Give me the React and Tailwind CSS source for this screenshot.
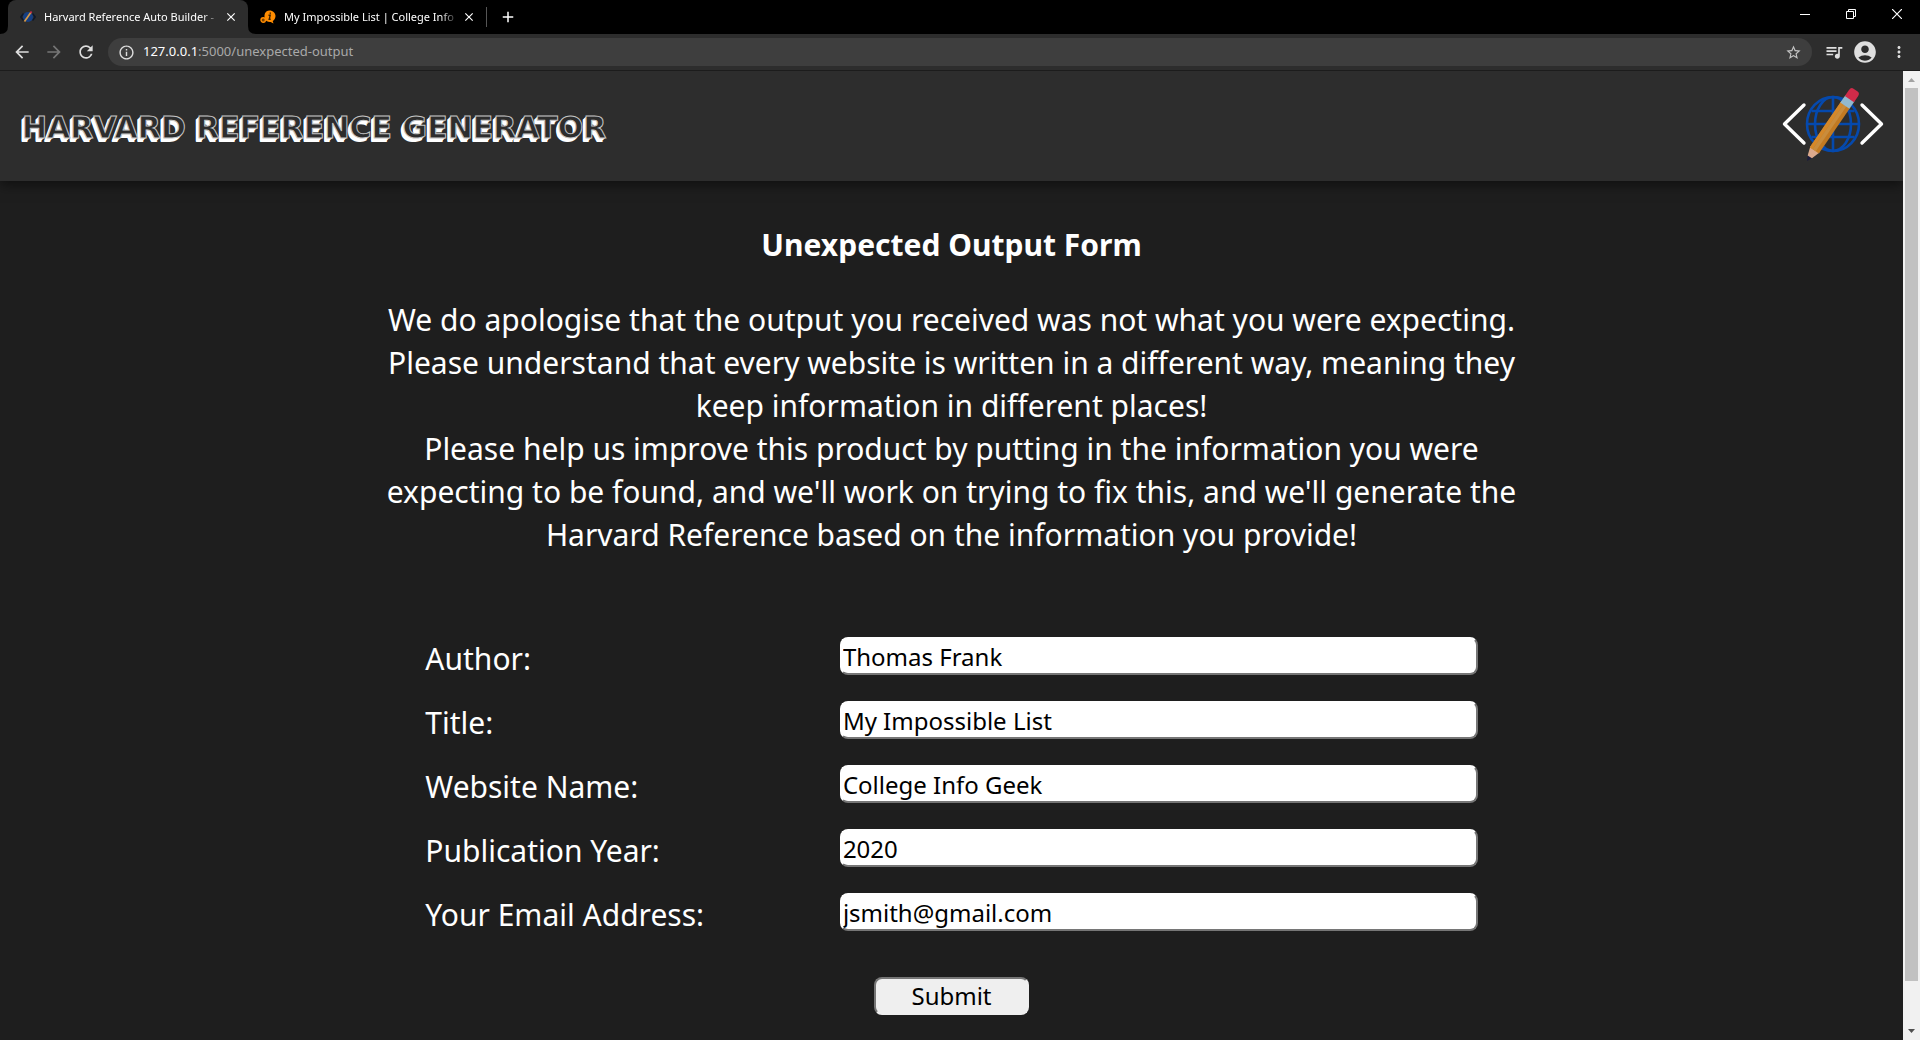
import { useState } from "react";
import {
  MdArrowBack,
  MdArrowForward,
  MdRefresh,
  MdInfoOutline,
  MdStarBorder,
  MdQueueMusic,
  MdAccountCircle,
  MdMoreVert,
  MdClose,
  MdAdd,
} from "react-icons/md";

const FIELDS = [
  { id: "author", label: "Author:", value: "Thomas Frank" },
  { id: "title", label: "Title:", value: "My Impossible List" },
  { id: "website", label: "Website Name:", value: "College Info Geek" },
  { id: "year", label: "Publication Year:", value: "2020" },
  { id: "email", label: "Your Email Address:", value: "jsmith@gmail.com" },
];

function Logo({ className }) {
  return (
    <svg viewBox="0 0 102 76" className={className} aria-hidden="true">
      <g fill="none" stroke="#0549ad" strokeWidth="2.6">
        <ellipse cx="51" cy="37" rx="26" ry="27" />
        <ellipse cx="51" cy="37" rx="18" ry="27" />
        <path d="M51 10v54M25 37h52M29.500 24h43M29.500 50h43" />
      </g>
      <g fill="none" stroke="#fff" strokeWidth="3.400" strokeLinecap="round" strokeLinejoin="round">
        <path d="M22 18 2.500 37 22 56" />
        <path d="M80 18 99.500 37 80 56" />
      </g>
      <g transform="translate(25 74) rotate(-55.600)">
        <path d="M0 0 6-3V3z" fill="#1b1c3c" />
        <path d="M5-2.600 14-5.500V5.500L5 2.600z" fill="#dba98c" />
        <path d="M13-5.500h56v11H13z" fill="#c27a22" />
        <path d="M13-5.500h56v3.600H13z" fill="#d4882a" />
        <path d="M13-1.900h56v3.600H13z" fill="#c98c3c" />
        <path d="M67-5.500h9v11h-9z" fill="#93b9cd" />
        <path d="M75-5.500h7q4 0 4 3v5q0 3-4 3h-7z" fill="#d02b49" />
      </g>
    </svg>
  );
}

function SiteIcon() {
  return (
    <svg viewBox="0 0 16 16" className="h-4 w-4 shrink-0" fill="none" aria-hidden="true">
      <path d="M3.500 4.500.8 8l2.700 3.500M12.500 4.500 15.200 8l-2.700 3.500" stroke="#111827" strokeWidth="1.500" />
      <circle cx="8" cy="8" r="5" fill="#163f82" />
      <path d="m4.500 12.500 6.300-9" stroke="#d79a45" strokeWidth="1.700" />
      <path d="m10.500 4 1-1.500" stroke="#d02b49" strokeWidth="1.700" />
    </svg>
  );
}

function GeekIcon() {
  return (
    <svg viewBox="0 0 16 16" className="h-4 w-4 shrink-0" aria-hidden="true">
      <path d="M9.500 1.500C13 1.500 15.500 4 15.500 7c0 2.300-1.200 4.100-2.800 5.100l.8 2.400-2.800-1.500c-2.500.3-4.700-.8-5.700-2.700C3.500 6 5 1.500 9.500 1.500z" fill="#ff8c00" />
      <circle cx="3.200" cy="11" r="2.200" fill="#7a4300" stroke="#ff8c00" strokeWidth="1.400" />
      <path d="M8.500 6.300h1.700l-1 4h1.500M10.300 3.600v1.200" stroke="#3a2000" strokeWidth="1.400" fill="none" />
    </svg>
  );
}

function TabStrip() {
  return (
    <div className="flex h-[34px] shrink-0 items-stretch bg-black pl-2 text-[11px] text-white">
      <div className="relative flex w-[240px] items-center rounded-t-lg bg-[#2d2d2d] pr-2.5 pl-3">
        <svg viewBox="0 0 8 8" className="absolute bottom-0 -left-2 h-2 w-2"><path d="M8 0v8H0q8 0 8-8z" fill="#2d2d2d" /></svg>
        <svg viewBox="0 0 8 8" className="absolute -right-2 bottom-0 h-2 w-2"><path d="M0 0v8h8q-8 0-8-8z" fill="#2d2d2d" /></svg>
        <SiteIcon />
        <span className="ml-2 flex-1 overflow-hidden whitespace-nowrap [mask-image:linear-gradient(to_right,black_90%,transparent)]">
          Harvard Reference Auto Builder -
        </span>
        <button type="button" aria-label="Close tab" className="ml-1"><MdClose size={14} /></button>
      </div>
      <div className="flex w-[238px] items-center pr-2.5 pl-3">
        <GeekIcon />
        <span className="ml-2 flex-1 overflow-hidden whitespace-nowrap [mask-image:linear-gradient(to_right,black_90%,transparent)]">
          My Impossible List | College Info
        </span>
        <button type="button" aria-label="Close tab" className="ml-1"><MdClose size={14} /></button>
      </div>
      <div className="flex items-center">
        <span className="h-5 w-px bg-[#555]" />
        <button type="button" aria-label="New tab" className="ml-3"><MdAdd size={18} /></button>
      </div>
      <div className="ml-auto flex items-center pb-1.5">
        <button type="button" aria-label="Minimise" className="flex w-[46px] justify-center">
          <svg width="10" height="10" viewBox="0 0 10 10"><path d="M0 5.500h10" stroke="#fff" /></svg>
        </button>
        <button type="button" aria-label="Restore" className="flex w-[46px] justify-center">
          <svg width="10" height="10" viewBox="0 0 10 10" fill="none" stroke="#fff"><path d="M.5 2.500h7v7h-7zM2.500 2.500v-2h7v7h-2" /></svg>
        </button>
        <button type="button" aria-label="Close window" className="flex w-[46px] justify-center">
          <svg width="10" height="10" viewBox="0 0 10 10"><path d="m0 0 10 10M10 0 0 10" stroke="#fff" strokeWidth="1.200" /></svg>
        </button>
      </div>
    </div>
  );
}

function Toolbar() {
  return (
    <div className="flex h-[37px] shrink-0 items-center border-b border-[#1c1c1c] bg-[#2d2d2d] pl-3 text-[#dedede]">
      <button type="button" aria-label="Back"><MdArrowBack size={20} /></button>
      <button type="button" aria-label="Forward" className="ml-3 text-[#757575]"><MdArrowForward size={20} /></button>
      <button type="button" aria-label="Reload" className="ml-3"><MdRefresh size={20} /></button>
      <div className="ml-3 flex h-7 flex-1 items-center rounded-full bg-[#3e3e3e] pr-2.5 pl-2.5">
        <MdInfoOutline size={17} />
        <a href="#form" className="ml-2 text-[13px] text-[#a9a9a9]">
          <span className="text-white">127.0.0.1</span>:5000/unexpected-output
        </a>
        <button type="button" aria-label="Bookmark" className="ml-auto text-[#c4c4c4]"><MdStarBorder size={17} /></button>
      </div>
      <button type="button" aria-label="Media" className="ml-3"><MdQueueMusic size={20} /></button>
      <button type="button" aria-label="Profile" className="ml-2"><MdAccountCircle size={26} /></button>
      <button type="button" aria-label="Menu" className="mr-3 ml-3"><MdMoreVert size={18} /></button>
    </div>
  );
}

function ScrollBar() {
  return (
    <div className="flex w-[17px] shrink-0 flex-col items-center bg-[#f1f1f1]">
      <svg width="17" height="17" viewBox="0 0 17 17"><path d="M5 11h7L8.500 7z" fill="#a3a3a3" /></svg>
      <div className="w-[13px] flex-[893] bg-[#c1c1c1]" />
      <div className="flex-[42]" />
      <svg width="17" height="17" viewBox="0 0 17 17"><path d="M5 6h7l-3.500 4z" fill="#505050" /></svg>
    </div>
  );
}

function Field({ id, label, value }) {
  const [text, setText] = useState(value);
  return (
    <div className="grid grid-cols-[13fr_20fr]">
      <label htmlFor={id} className="text-[30px] leading-[44px]">{label}</label>
      <input
        id={id}
        value={text}
        onChange={(e) => setText(e.target.value)}
        className="h-[38px] w-full rounded-lg border-2 border-t-white border-r-[#767676] border-b-[#767676] border-l-white bg-white px-px text-[24px] leading-[34px] text-black"
      />
    </div>
  );
}

export default function App() {
  return (
    <div className="flex h-screen flex-col overflow-hidden font-['Noto_Sans',sans-serif]">
      <TabStrip />
      <Toolbar />
      <div className="flex min-h-0 flex-1">
        <div className="flex min-w-0 flex-1 flex-col overflow-hidden bg-[#1e1e1e] text-white">
          <header className="flex h-[110px] shrink-0 items-center justify-between bg-[#2d2d2d] pr-[19px] pb-0.5 pl-[22px] shadow-[0_4px_12px_rgba(0,0,0,0.5)]">
            <h1 className="pt-1 font-['DejaVu_Sans',sans-serif] text-[30px] font-bold whitespace-nowrap text-[#2d2d2d] uppercase [-webkit-text-stroke:1px_#c4c4c4] [text-shadow:-1px_1px_0_#fff,-2px_2px_0_#fff,-3px_3px_0_#fff,-3px_4px_0_#fff]">
              Harvard Reference Generator
            </h1>
            <Logo className="h-[76px] w-[102px]" />
          </header>
          <main id="form" className="flex flex-col items-center">
            <h2 className="mt-[42px] text-[30px] leading-[43px] font-bold">Unexpected Output Form</h2>
            <p className="mt-8 text-center text-[30px] leading-[43px] whitespace-nowrap">
              We do apologise that the output you received was not what you were expecting.<br />
              Please understand that every website is written in a different way, meaning they<br />
              keep information in different places!<br />
              Please help us improve this product by putting in the information you were<br />
              expecting to be found, and we'll work on trying to fix this, and we'll generate the<br />
              Harvard Reference based on the information you provide!
            </p>
            <form className="mt-[81px] flex w-[55.3%] flex-col items-center gap-5" onSubmit={(e) => e.preventDefault()}>
              <div className="flex w-full flex-col gap-5">
                {FIELDS.map((field) => (
                  <Field key={field.id} {...field} />
                ))}
              </div>
              <button
                type="submit"
                className="mt-5 h-[38px] w-[155px] rounded-lg border-2 border-t-[#767676] border-r-[#efefef] border-b-[#efefef] border-l-[#767676] bg-[#efefef] text-[24px] leading-[34px] text-black"
              >
                Submit
              </button>
            </form>
          </main>
        </div>
        <ScrollBar />
      </div>
    </div>
  );
}
